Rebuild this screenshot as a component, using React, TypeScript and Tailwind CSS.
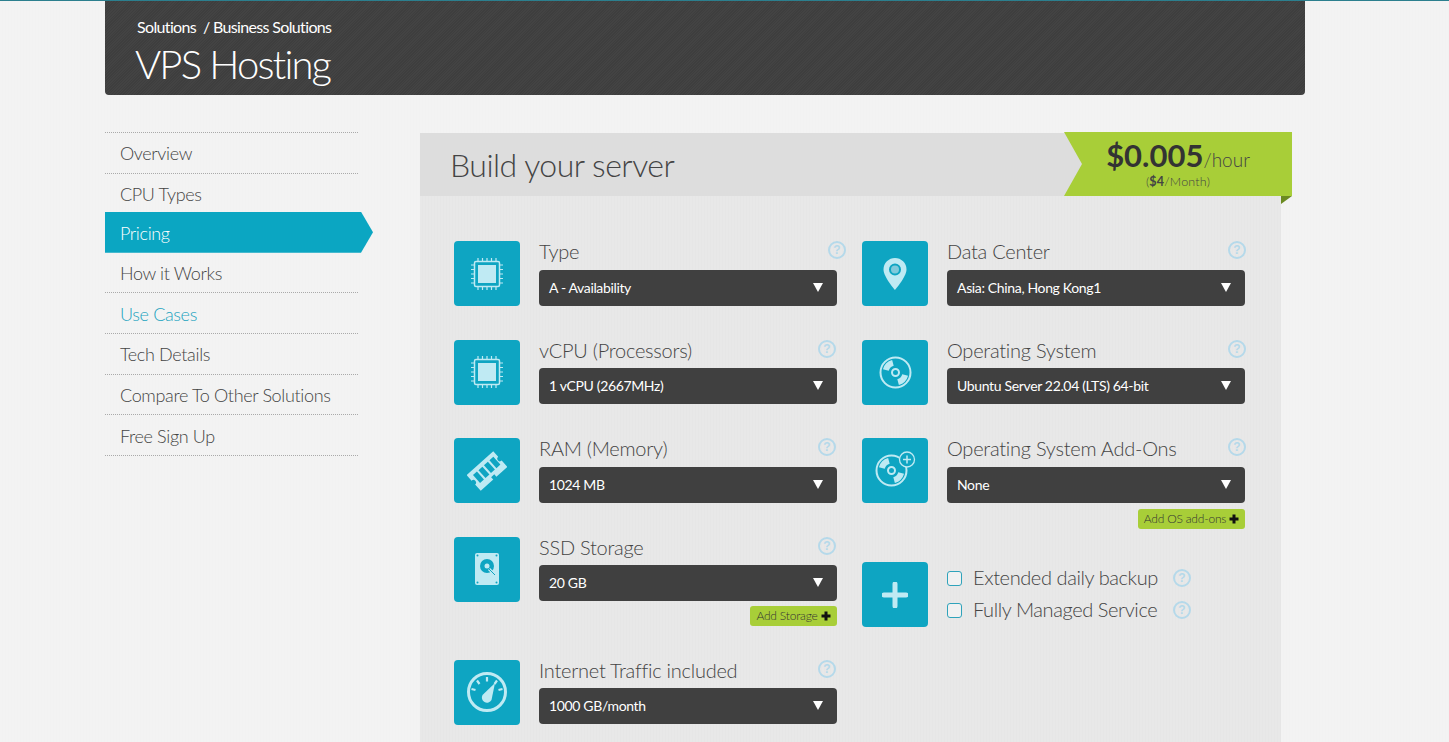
import React from "react";

const navItems = ["Overview", "CPU Types", "Pricing", "How it Works", "Use Cases", "Tech Details", "Compare To Other Solutions", "Free Sign Up"];

function ChipIcon() {
  return (
    <svg width="34" height="34" viewBox="0 0 34 34" fill="none" stroke="#bfeaf3" strokeWidth="1.2">
      <rect x="4.500" y="4.500" width="25" height="25" rx="1.500" strokeWidth="1.500" />
      <rect x="8" y="8" width="18" height="18" fill="#bfeaf3" stroke="none" />
      <path d="M8 1v3M12.500 1v3M17 1v3M21.500 1v3M26 1v3M8 30v3M12.500 30v3M17 30v3M21.500 30v3M26 30v3M1 8h3M1 12.500h3M1 17h3M1 21.500h3M1 26h3M30 8h3M30 12.500h3M30 17h3M30 21.500h3M30 26h3" />
    </svg>
  );
}

function RamIcon() {
  return (
    <svg width="40" height="40" viewBox="0 0 38 38">
      <g transform="rotate(-42 19 19)">
        <path
          fillRule="evenodd"
          fill="#bfeaf3"
          d="M2 9h34v7a2.500 2.500 0 0 0 0 5v8H22v-3h-4v3H2v-8a2.500 2.500 0 0 0 0-5z M6.500 13v10h5v-10z M13.500 13v10h5v-10z M20.500 13v10h5v-10z M27.500 13v10h5v-10z"
        />
      </g>
    </svg>
  );
}

function DriveIcon() {
  return (
    <svg width="26" height="34" viewBox="0 0 26 34">
      <rect x="1" y="1" width="24" height="32" rx="2" fill="#bfeaf3" />
      <circle cx="13" cy="14" r="7" fill="#0ea5c2" />
      <circle cx="13" cy="14" r="2.500" fill="#bfeaf3" />
      <path d="M15 17l6 6" stroke="#bfeaf3" strokeWidth="3" />
      <path d="M15 17l6 6" stroke="#0ea5c2" strokeWidth="1" />
      <g fill="#0ea5c2">
        <circle cx="3.500" cy="3.500" r="1" />
        <circle cx="22.500" cy="3.500" r="1" />
        <circle cx="3.500" cy="30.500" r="1" />
        <circle cx="22.500" cy="30.500" r="1" />
      </g>
    </svg>
  );
}

function GaugeIcon() {
  return (
    <svg width="42" height="42" viewBox="0 0 42 42" fill="none" stroke="#bfeaf3">
      <circle cx="21" cy="21" r="18.500" strokeWidth="3" />
      <path strokeWidth="2.200" d="M21 6v4.500M11 9.500l2.500 3.500M5.500 18l4 1M36.500 18l-4 1M31 9.500l-2.500 3.500" />
      <path fill="#bfeaf3" stroke="none" d="M29 12L25.500 29a5 5 0 1 1-9-5z" />
    </svg>
  );
}

function PinIcon() {
  return (
    <svg width="24" height="33" viewBox="0 0 24 33">
      <path
        fillRule="evenodd"
        fill="#bfeaf3"
        d="M12 1a11.500 11.500 0 0 1 11.500 11.500C23.500 20 12 33 12 33S.500 20 .500 12.500A11.500 11.500 0 0 1 12 1z M12 6.500a6 6 0 1 0 0 12 6 6 0 0 0 0-12z"
      />
      <circle cx="12" cy="12.500" r="4" fill="#7fcadb" />
    </svg>
  );
}

function Disc() {
  return (
    <g fill="none" stroke="#bfeaf3">
      <circle cx="16.500" cy="16.500" r="15" strokeWidth="2" />
      <circle cx="16.500" cy="16.500" r="3.500" strokeWidth="2" />
      <path strokeWidth="6" d="M6.840 13.910A10 10 0 0 1 13.910 6.840M26.160 19.090A10 10 0 0 1 19.090 26.160" />
    </g>
  );
}

function DiscIcon() {
  return (
    <svg width="33" height="33" viewBox="0 0 33 33">
      <Disc />
    </svg>
  );
}

function DiscPlusIcon() {
  return (
    <svg width="40" height="34" viewBox="0 0 40 34" className="overflow-visible">
      <Disc />
      <circle cx="32" cy="5.500" r="7.500" fill="#0ea5c2" stroke="#bfeaf3" strokeWidth="1.300" />
      <path d="M32 1.500v8M28 5.500h8" stroke="#bfeaf3" strokeWidth="1.500" />
    </svg>
  );
}

function PlusIcon() {
  return (
    <svg width="26" height="26" viewBox="0 0 26 26">
      <path d="M13 2v22M2 13h22" stroke="#bfeaf3" strokeWidth="5" strokeLinecap="round" />
    </svg>
  );
}

function Help() {
  return (
    <span className="flex h-[18px] w-[18px] shrink-0 items-center justify-center rounded-full border-2 border-[#b5d9ea] font-['Liberation_Sans',sans-serif] text-[12px] leading-none font-bold text-[#b5d9ea]">
      ?
    </span>
  );
}

function IconBox({ children }: { children: React.ReactNode }) {
  return (
    <div className="mr-[19px] flex h-[65px] w-[66px] shrink-0 items-center justify-center rounded-[4px] bg-[#0ea5c2]">
      {children}
    </div>
  );
}

function AddButton({ label, className }: { label: string; className: string }) {
  return (
    <div className={`ml-auto flex h-5 items-center justify-center gap-[3px] rounded-[3px] bg-[#a8ce38] text-[12px] text-[#333] ${className}`}>
      <span className="tracking-[-0.2px]">{label}</span>
      <svg width="10" height="10" viewBox="0 0 10 10">
        <path d="M5 0.500v9M0.500 5h9" stroke="#111" strokeWidth="3" />
      </svg>
    </div>
  );
}

type FieldProps = {
  icon: React.ReactNode;
  label: string;
  value: string;
  helpClass?: string;
  children?: React.ReactNode;
};

function Field({ icon, label, value, helpClass = "", children }: FieldProps) {
  return (
    <div className="mb-[33.5px] flex">
      <IconBox>{icon}</IconBox>
      <div className="w-[298px]">
        <div className="flex h-[28.5px] items-start justify-between">
          <span className="text-[20px] leading-[20px] tracking-[-0.25px] text-[#444]">{label}</span>
          <span className={helpClass}>
            <Help />
          </span>
        </div>
        <div className="flex h-9 items-center justify-between rounded-[4px] bg-[#404040] pr-[14px] pb-px pl-[10px] text-[14px] font-normal tracking-[-0.35px] text-white">
          <span>{value}</span>
          <span className="h-0 w-0 border-x-[5.5px] border-t-[9px] border-x-transparent border-t-white" />
        </div>
        {children}
      </div>
    </div>
  );
}

function CheckRow({ label }: { label: string }) {
  return (
    <div className="flex h-8 items-center">
      <span className="mr-[11px] h-[15px] w-[15px] rounded-[3px] border border-[#2fa3bb] bg-[#f1f1f1]" />
      <span className="-mt-1 w-[200px] text-[20px] tracking-[-0.4px] text-[#444]">{label}</span>
      <span className="-mt-0.5">
        <Help />
      </span>
    </div>
  );
}

export default function App() {
  return (
    <div className="h-screen overflow-hidden border-t border-[#2c7f8e] bg-[#f3f3f3] bg-[repeating-linear-gradient(90deg,#f3f3f3_0px,#f3f3f3_2px,#f2f2f2_2px,#f2f2f2_3px)] font-['Lato',sans-serif] font-light">
      <div className="ml-[105px] w-[1200px]">
        {/* top banner */}
        <header className="-mt-px h-[95px] rounded-b-[4px] bg-[#404040] bg-[repeating-linear-gradient(135deg,#434343_0px,#434343_1px,#3e3e3e_1px,#3e3e3e_2px)] pt-[16px] pl-[30px] text-white">
          <div className="pl-[2px] text-[16px] leading-[22px] font-normal tracking-[-0.65px]">Solutions &nbsp;/ Business Solutions</div>
          <h1 className="mt-px text-[40px] leading-[50px] tracking-[-1.85px]">VPS Hosting</h1>
        </header>

        <div className="mt-[37px] flex">
          {/* side nav */}
          <nav className="w-[253px] shrink-0 border-t border-dotted border-[#aaa] text-[18px] tracking-[-0.35px] text-[#444]">
            {navItems.map((item) =>
              item === "Pricing" ? (
                <div
                  key={item}
                  className="relative -mt-[2.5px] flex h-[41px] w-[268px] items-center bg-[#0ba6c2] pt-[2px] pl-[15px] text-white [clip-path:polygon(0_0,256px_0,100%_50%,256px_100%,0_100%)]"
                >
                  {item}
                </div>
              ) : (
                <div
                  key={item}
                  className={`flex h-[40.65px] items-center border-b border-dotted border-[#aaa] pt-[2px] pl-[15px] ${item === "Use Cases" ? "text-[#1ba3bf]" : ""}`}
                >
                  {item}
                </div>
              ),
            )}
          </nav>

          {/* builder panel */}
          <main className="relative mt-px ml-[62px] h-[700px] w-[861px] bg-[#e8e8e8] bg-[repeating-linear-gradient(90deg,#e8e8e8_0px,#e8e8e8_2px,#e6e6e6_2px,#e6e6e6_3px)]">
            <div className="flex h-[63px] items-center bg-[#dddddd] pl-[30px] text-[32px] tracking-[-0.5px] text-[#444]">
              Build your server
            </div>
            {/* price ribbon */}
            <div className="absolute top-[-1px] left-[644px] flex h-[64px] w-[228px] flex-col items-center bg-[#a8ce38] pt-[9px] text-[#444] [clip-path:polygon(0_0,100%_0,100%_100%,0_100%,18px_50%)]">
              <div className="flex h-7 items-baseline">
                <div className="h-7 text-[31px] leading-7 font-bold text-[#333]">$0.005</div>
                <div className="h-7 text-[19px] leading-7">/hour</div>
              </div>
              <div className="mt-[5px] text-[12.5px] leading-[15px] tracking-[0.2px]">
                (<span className="font-bold">$4</span>/Month)
              </div>
            </div>
            <span className="absolute top-[63px] left-[861px] h-0 w-0 border-t-[8px] border-r-[11px] border-t-[#6b8a20] border-r-transparent" />

            <div className="flex pt-[45px] pl-[34px]">
              <div className="w-[408px] shrink-0">
                <Field icon={<ChipIcon />} label="Type" value="A - Availability" helpClass="-mr-[9px]" />
                <Field icon={<ChipIcon />} label="vCPU (Processors)" value="1 vCPU (2667MHz)" helpClass="mr-px" />
                <Field icon={<RamIcon />} label="RAM (Memory)" value="1024 MB" helpClass="mr-px" />
                <Field icon={<DriveIcon />} label="SSD Storage" value="20 GB" helpClass="mr-px">
                  <AddButton label="Add Storage" className="mt-[5px] w-[87px]" />
                </Field>
                <Field icon={<GaugeIcon />} label="Internet Traffic included" value="1000 GB/month" helpClass="mr-px" />
              </div>
              <div className="w-[383px] shrink-0">
                <Field icon={<PinIcon />} label="Data Center" value="Asia: China, Hong Kong1" helpClass="-mr-px" />
                <Field icon={<DiscIcon />} label="Operating System" value="Ubuntu Server 22.04 (LTS) 64-bit" helpClass="-mr-px" />
                <Field icon={<DiscPlusIcon />} label="Operating System Add-Ons" value="None" helpClass="-mr-px">
                  <AddButton label="Add OS add-ons" className="mt-[6px] w-[107px]" />
                </Field>
                <div className="flex items-center">
                  <IconBox>
                    <PlusIcon />
                  </IconBox>
                  <div>
                    <CheckRow label="Extended daily backup" />
                    <CheckRow label="Fully Managed Service" />
                  </div>
                </div>
              </div>
            </div>
          </main>
        </div>
      </div>
    </div>
  );
}
